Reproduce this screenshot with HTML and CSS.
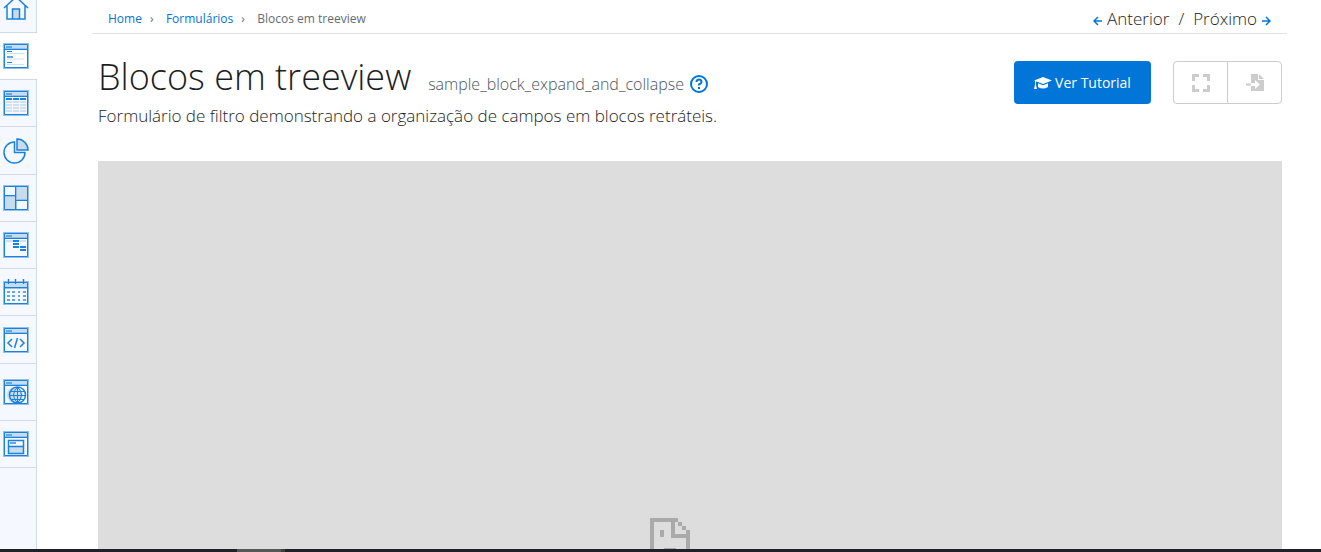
FILE: index.html
```html
<!DOCTYPE html>
<html lang="pt-BR">

<head>
    <meta charset="UTF-8">
    <meta name="viewport" content="width=device-width, initial-scale=1.0">
    <title>Blocos em treeview</title>
    <link rel="stylesheet" href="styles.css">
</head>

<body>
    <div class="app">
        <nav class="sidebar" aria-label="Menu">
            <a class="menu-item menu-home" href="#" aria-label="Home">
                <svg viewBox="0 0 26 26">
                    <path class="tint" d="M9.500 14h7v10h-7z" />
                    <path class="bold" d="M1 13L13 2l12 11M4 11v13h18V11M9.500 24V14h7v10" />
                </svg>
            </a>
            <a class="menu-item active" href="#" aria-label="Formulários">
                <svg viewBox="0 0 26 26">
                    <path class="tint" d="M2 2h22v4H2z" />
                    <path class="halo" d="M1 1h24v24H1zM1 6h24" />
                    <path d="M1.500 1.500h23v23h-23zM1 6.500h24" />
                    <path class="soft" d="M3 4h6M4 14h6" />
                    <path class="pale" d="M4 10.500h17M4 16h17M4 21.500h17" />
                    <path d="M4 8.500h5M4 19.500h5" />
                </svg>
            </a>
            <a class="menu-item" href="#" aria-label="Consultas">
                <svg viewBox="0 0 26 26">
                    <path class="tint" d="M2 2h22v4H2z" />
                    <path class="halo" d="M1 1h24v24H1zM1 6h24" />
                    <path d="M1.500 1.500h23v23h-23zM1 6.500h24" />
                    <path class="soft" d="M3 4h6" />
                    <path class="thick" d="M3 9h6m1 0h6m1 0h6" />
                    <path class="pale thick" d="M3 12h6m1 0h6m1 0h6M3 15h6m1 0h6m1 0h6M3 18h6m1 0h6m1 0h6M3 21h6m1 0h6m1 0h6" />
                </svg>
            </a>
            <a class="menu-item menu-chart" href="#" aria-label="Gráficos">
                <svg viewBox="0 0 26 26">
                    <path class="tint" d="M14 1a11 11 0 0 1 11 11H14z" />
                    <path class="bold" d="M14 1a11 11 0 0 1 11 11H14zM11.500 4a10.500 10.500 0 1 0 10.500 10.500H11.500z" />
                </svg>
            </a>
            <a class="menu-item" href="#" aria-label="Painéis">
                <svg viewBox="0 0 26 26">
                    <path class="tint" d="M13 2h11v13H13zM2 11h11v13H2z" />
                    <path class="halo" d="M1 1h24v24H1zM13 1v24M1 11h12M13 15h12" />
                    <path d="M1.500 1.500h23v23h-23zM12.500 1v24M1 10.500h12M13 15.500h12" />
                </svg>
            </a>
            <a class="menu-item" href="#" aria-label="Treeview">
                <svg viewBox="0 0 26 26">
                    <path class="tint" d="M2 2h22v4H2z" />
                    <path class="halo" d="M1 1h24v24H1zM1 6h24" />
                    <path d="M1.500 1.500h23v23h-23zM1 6.500h24" />
                    <path class="soft" d="M3 4h6" />
                    <path class="pale thick" d="M3 9h20" />
                    <path class="thick" d="M10 9h6M10 12h6M10 15h6M17 15h6M17 18h6" />
                </svg>
            </a>
            <a class="menu-item" href="#" aria-label="Calendário">
                <svg viewBox="0 0 26 26">
                    <path class="tint" d="M2 3h22v5H2z" />
                    <path class="halo" d="M1 3h24v22H1zM1 9h24M5.500 0v5M12.500 0v5M20.500 0v5" />
                    <path d="M1.500 3.500h23v21h-23zM1 8.500h24M5.500 0v5M12.500 0v5M20.500 0v5" />
                    <path class="soft" d="M4 13h3m2 0h3m3 0h2m3 0h3M4 17h3m2 0h3m3 0h2m3 0h3M4 21h3m2 0h3m3 0h2m3 0h3" />
                </svg>
            </a>
            <a class="menu-item menu-code" href="#" aria-label="Código">
                <svg viewBox="0 0 26 26">
                    <path class="tint" d="M2 2h22v4H2z" />
                    <path class="halo" d="M1 1h24v24H1zM1 6h24" />
                    <path d="M1.500 1.500h23v23h-23zM1 6.500h24" />
                    <path class="bold" d="M9 12l-4 4 4 4M17 12l4 4-4 4M14.500 11l-3 10" />
                    <path class="soft" d="M3 4h6" />
                </svg>
            </a>
            <a class="menu-item menu-web" href="#" aria-label="Web">
                <svg viewBox="0 0 26 26">
                    <path class="tint" d="M2 2h22v4H2z" />
                    <circle class="tint" cx="12" cy="16" r="8" />
                    <path class="halo" d="M1 1h24v24H1zM1 6h24" />
                    <path d="M1.500 1.500h23v23h-23zM1 6.500h24" />
                    <circle class="bold" cx="14.500" cy="16" r="8" />
                    <path d="M6.500 16.500h16M14.500 8v16M8 12.500h13M8 20.500h13M14.500 8q-8 8 0 16M14.500 8q8 8 0 16" />
                    <path class="soft" d="M3 4h6" />
                </svg>
            </a>
            <a class="menu-item" href="#" aria-label="Janela">
                <svg viewBox="0 0 26 26">
                    <path class="tint" d="M2 2h22v4H2zM6 15h14v7H6z" />
                    <path class="halo" d="M1 1h24v24H1zM1 6h24" />
                    <path d="M1.500 1.500h23v23h-23zM1 6.500h24" />
                    <path class="bold" d="M5.500 9.500h15v13h-15zM5 15.500h16" />
                    <path class="soft" d="M3 4h6M7 12h6" />
                </svg>
            </a>
        </nav>

        <main class="main">
            <div class="topbar">
                <nav class="breadcrumb" aria-label="Breadcrumb">
                    <a href="#">Home</a>
                    <span class="sep">›</span>
                    <a href="#">Formulários</a>
                    <span class="sep">›</span>
                    <span>Blocos em treeview</span>
                </nav>
                <div class="pager">
                    <a href="#"><svg viewBox="0 0 10 10"><path d="M9 5H1M5 1L1 5l4 4" /></svg>Anterior</a>
                    <span>/</span>
                    <a href="#">Próximo<svg viewBox="0 0 10 10"><path d="M1 5h8M5 1l4 4-4 4" /></svg></a>
                </div>
            </div>

            <header class="header">
                <div>
                    <div class="title-row">
                        <h1>Blocos em treeview</h1>
                        <span class="app-name">sample_block_expand_and_collapse</span>
                        <a class="help" href="#" aria-label="Ajuda">
                            <svg viewBox="0 0 18 18">
                                <circle cx="9" cy="9" r="8" />
                                <path d="M6.500 7Q6.500 4.500 9 4.500T11.500 7Q11.500 8.200 9 9.500V10.500M9 12v2" />
                            </svg>
                        </a>
                    </div>
                    <p>Formulário de filtro demonstrando a organização de campos em blocos retráteis.</p>
                </div>
                <div class="actions">
                    <button class="btn-tutorial" type="button">
                        <svg viewBox="0 0 18 14">
                            <path d="M9 1L0 4.500 9 8l9-3.500zM4 7.200V11q5 3 10 0V7.200L9 9.200zM1 5h1v4l1 4H0l1-4z" />
                        </svg>
                        Ver Tutorial
                    </button>
                    <div class="btn-group">
                        <button type="button" aria-label="Tela cheia">
                            <svg viewBox="0 0 18 18">
                                <path class="corners" d="M1.500 7V1.500H7M11 1.500h5.500V7M16.500 11v5.500H11M7 16.500H1.500V11" />
                            </svg>
                        </button>
                        <button type="button" aria-label="Abrir">
                            <svg viewBox="0 0 18 18">
                                <path d="M5 0h7v6h6v11H5v-5h4v3l5-4.500L9 6v3H5zM13 0l5 5h-5zM0 9.500h5v2H0z" />
                                <path d="M5 9.500h5v2H5z" fill="white" />
                            </svg>
                        </button>
                    </div>
                </div>
            </header>

            <section class="preview" aria-label="Exemplo">
                <svg class="sad-page" viewBox="0 0 40 48" shape-rendering="crispEdges">
                    <path d="M0 0h28v4H4v44H0zM21 4h4v12h15v32h-4V20H21zM28 4h4v4h-4zM32 8h4v4h-4zM36 12h4v4h-4zM10 12h4v7h-4zM14 30h12v4H14z" />
                </svg>
            </section>
        </main>
    </div>
    <div class="taskbar"><span></span></div>
</body>

</html>
```
FILE: styles.css
```css
:root {
    --primary-color: #0275d8;
    --text-color: #1c1e1f;
    --muted-color: #636c72;
    --sidebar-color: #f5f9ff;
    --line-color: #d0d9e6;
}

* {
    box-sizing: border-box;
}

body {
    display: flex;
    flex-direction: column;
    height: 100vh;
    margin: 0;
    overflow: hidden;
    font-family: 'Open Sans', sans-serif;
    font-size: 17px;
    font-weight: 300;
    color: var(--text-color);
    background-color: white;
}

a {
    color: var(--primary-color);
    text-decoration: none;
}

svg {
    display: block;
    flex: none;
}

.app {
    display: flex;
    flex: 1;
    min-height: 0;
}

/* Sidebar */
.sidebar {
    display: flex;
    flex-direction: column;
    flex: none;
    width: 37px;
    background: linear-gradient(to left, var(--line-color) 1px, var(--sidebar-color) 1px);
}

.menu-item {
    display: flex;
    align-items: center;
    flex: none;
    height: 47px;
    padding-left: 3px;
    border-bottom: 1px solid var(--line-color);
}

.menu-item.active {
    background-color: white;
}

.menu-home {
    align-items: flex-end;
    height: 33px;
    padding-bottom: 11px;
    overflow: hidden;
}

.menu-chart,
.menu-code {
    height: 48px;
}

.menu-web {
    height: 57px;
}

.menu-item svg {
    width: 26px;
    height: 26px;
    fill: none;
    stroke: #1a82dc;
    stroke-width: 1;
}

.menu-item .tint {
    fill: #c8dcec;
    stroke: none;
}

.menu-item .halo {
    stroke: #8fc0ee;
    stroke-width: 2;
}

.menu-item .soft {
    stroke: #68a6df;
    stroke-width: 2;
}

.menu-item .pale {
    stroke: #d0e0ee;
}

.menu-item .bold {
    stroke-width: 1.5;
}

.menu-item .thick {
    stroke-width: 2;
}

/* Content */
.main {
    display: flex;
    flex-direction: column;
    flex: 1;
    min-width: 0;
    padding: 0 34px 0 55px;
}

.topbar {
    display: flex;
    justify-content: space-between;
    height: 34px;
    padding: 0 16px;
    border-bottom: 1px solid #e1e2e6;
    line-height: 38px;
}

.breadcrumb {
    display: flex;
    gap: 8px;
    font-size: 12px;
    font-weight: 400;
    color: var(--muted-color);
}

.breadcrumb .sep {
    width: 8px;
}

.pager {
    display: flex;
    gap: 9px;
}

.pager a {
    display: flex;
    align-items: center;
    gap: 4px;
    height: 38px;
    color: var(--text-color);
}

.pager svg {
    width: 10px;
    height: 10px;
    margin-top: 4px;
    fill: none;
    stroke: var(--primary-color);
    stroke-width: 1.5;
}

.header {
    display: flex;
    justify-content: space-between;
    padding: 18px 5px 32px 6px;
}

.title-row {
    display: flex;
    align-items: baseline;
}

h1 {
    margin: 0;
    font-size: 36px;
    font-weight: 300;
    line-height: 50px;
}

.app-name {
    margin-left: 17px;
    font-size: 16px;
    color: #4c555b;
}

.help {
    align-self: flex-end;
    margin: 0 0 9px 6px;
}

.help svg {
    width: 18px;
    height: 18px;
    fill: none;
    stroke: var(--primary-color);
    stroke-width: 2;
}

.header p {
    margin: 0;
    line-height: 27px;
}

.actions {
    display: flex;
    gap: 22px;
    margin-top: 9px;
}

button {
    display: flex;
    align-items: center;
    justify-content: center;
    padding: 0;
    font-family: inherit;
    cursor: pointer;
}

.btn-tutorial {
    gap: 3px;
    width: 137px;
    height: 43px;
    border: none;
    border-radius: 4px;
    font-size: 14px;
    color: white;
    background-color: var(--primary-color);
}

.btn-tutorial svg {
    width: 18px;
    height: 14px;
    fill: white;
}

.btn-group {
    display: flex;
    height: 43px;
    border: 1px solid #ccc;
    border-radius: 4px;
}

.btn-group button {
    width: 53px;
    border: none;
    background-color: transparent;
}

.btn-group button + button {
    width: 54px;
    border-left: 1px solid #ccc;
}

.btn-group svg {
    width: 18px;
    height: 18px;
    fill: #ccc;
}

.btn-group .corners {
    fill: none;
    stroke: #ccc;
    stroke-width: 3;
}

.preview {
    flex: 1;
    min-height: 0;
    margin: 0 5px 0 6px;
    padding: 357px 40px 0 0;
    overflow: hidden;
    background-color: #ddd;
}

.sad-page {
    width: 40px;
    height: 48px;
    margin: 0 auto;
    fill: #aaa;
}

.taskbar {
    flex: none;
    height: 3px;
    padding-left: 237px;
    background-color: #1e2226;
}

.taskbar span {
    display: block;
    width: 48px;
    height: 3px;
    border-right: 4px solid #3a3f40;
    background-color: #555857;
}
```
